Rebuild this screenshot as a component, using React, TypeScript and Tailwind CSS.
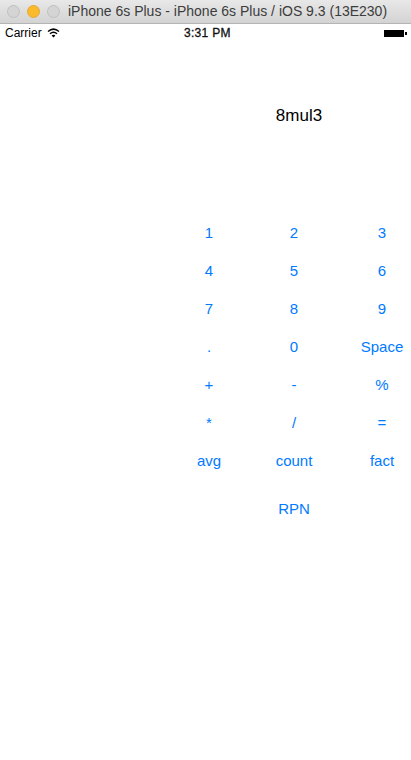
const rows = [
    ["1", "2", "3"],
    ["4", "5", "6"],
    ["7", "8", "9"],
    [".", "0", "Space"],
    ["+", "-", "%"],
    ["*", "/", "="],
    ["avg", "count", "fact"],
];

function TitleBar() {
    return (
        <div className="h-[24px] flex items-center bg-gradient-to-b from-[#e8e8e8] to-[#d3d3d3] border-b border-[#b4b4b4]">
            <div className="flex items-center gap-[7px] pl-[7px]">
                <div className="w-[13px] h-[13px] rounded-full bg-[#d4d4d4] border border-[#c0c0c0]" />
                <div className="w-[13px] h-[13px] rounded-full bg-[#fbb92e] border border-[#e5a935]" />
                <div className="w-[13px] h-[13px] rounded-full bg-[#d4d4d4] border border-[#c0c0c0]" />
            </div>
            <span className="ml-[8px] text-[14px] text-[#3c3c3c] whitespace-nowrap">
                iPhone 6s Plus - iPhone 6s Plus / iOS 9.3 (13E230)
            </span>
        </div>
    );
}

function StatusBar() {
    return (
        <div className="relative h-[18px] flex items-center justify-between px-[5px] text-[12px] text-black">
            <div className="flex items-center gap-[5px]">
                <span>Carrier</span>
                <svg width="13" height="10" viewBox="0 0 13 10" fill="none" stroke="black" strokeWidth="1.5">
                    <path d="M1 3.5C4.5 .5 8.5 .5 12 3.5" />
                    <path d="M3 5.7C5 4 8 4 10 5.7" />
                    <path d="M6.5 9.5L4.6 7.5C5.7 6.6 7.3 6.6 8.4 7.5Z" fill="black" stroke="none" />
                </svg>
            </div>
            <span className="absolute left-[184px] tracking-[0.3px] [-webkit-text-stroke:0.3px_#111] text-[#111]">3:31 PM</span>
            <div className="flex items-center gap-[1px] mr-[-1px]">
                <div className="w-[20px] h-[7px] bg-black" />
                <div className="w-[2px] h-[3px] bg-black" />
            </div>
        </div>
    );
}

export default function App() {
    return (
        <div className="w-[411px] h-[760px] overflow-hidden bg-white font-['Liberation_Sans',Arial,sans-serif]">
            <TitleBar />
            <StatusBar />
            <div className="pl-[183px] pt-[61px]">
                <div className="grid grid-cols-[52px_118px_58px] text-center">
                    <div className="col-start-2 h-[26px] pl-[10px] flex items-center justify-center text-[17px] text-black">
                        8mul3
                    </div>
                </div>
                <div className="grid grid-cols-[52px_118px_58px] auto-rows-[38px] mt-[85px] text-[15px] text-[#007aff]">
                    {rows.map((row) =>
                        row.map((label) => (
                            <button key={label} className="flex items-center justify-center whitespace-nowrap">
                                {label}
                            </button>
                        ))
                    )}
                </div>
                <div className="grid grid-cols-[52px_118px_58px] mt-[10px] text-[15px] text-[#007aff]">
                    <button className="col-start-2 h-[38px] flex items-center justify-center">RPN</button>
                </div>
            </div>
        </div>
    );
}
